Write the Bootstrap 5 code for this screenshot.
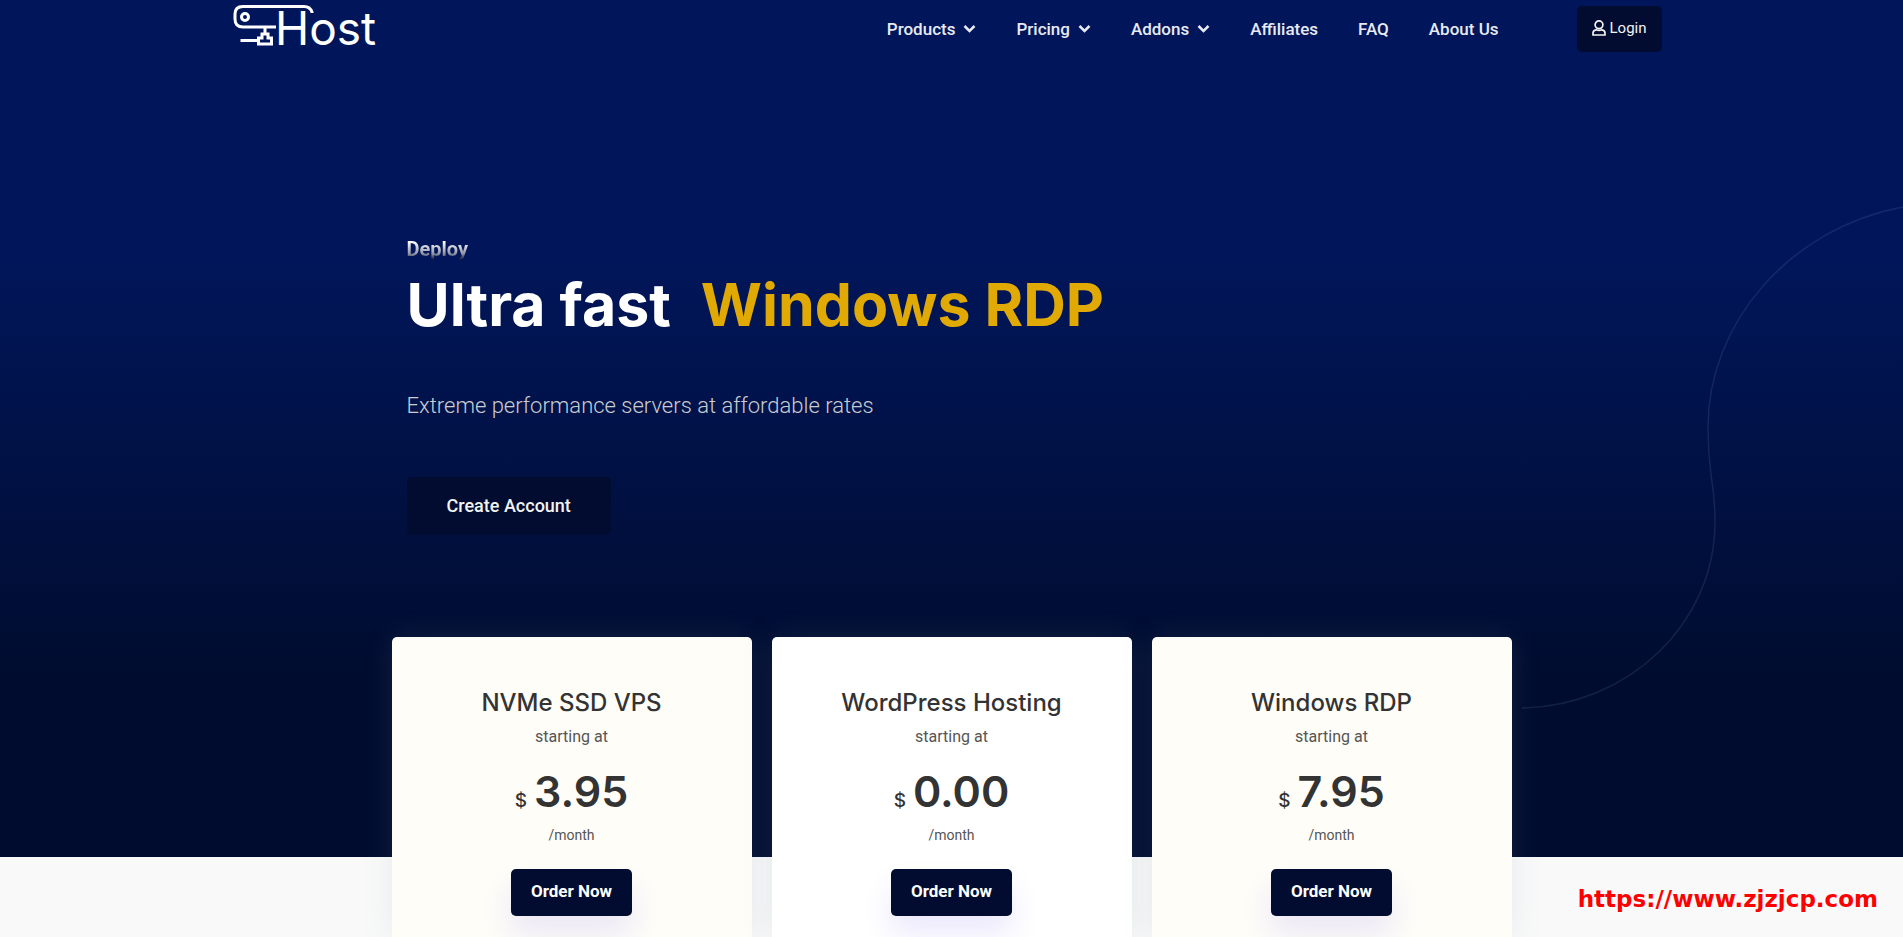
<!DOCTYPE html>
<html lang="en">
<head>
<meta charset="utf-8">
<meta name="viewport" content="width=device-width, initial-scale=1">
<title>Host</title>
<link href="https://cdn.jsdelivr.net/npm/bootstrap@5.3.0/dist/css/bootstrap.min.css" rel="stylesheet">
<style>
  :root { --ink: #010c30; --display: Inter, "Noto Sans", sans-serif; }
  body { font-family: Roboto, "Liberation Sans", sans-serif; background: #f9f9f9; color: #333; }
  .hero { background: linear-gradient(180deg, #01165a 0%, #01165a 30%, #000c2f 79%, #000c2f 100%); padding-bottom: 322px; }
  .curve { position: absolute; right: 0; top: 204px; width: 383px; height: 506px; }
  .topbar { max-width: 1440px; height: 57px; padding: 0 10px 0 0; }
  .topbar .nav-link { color: #e8eaf2; font-weight: 500; font-size: 17px; line-height: 24px; padding: 0 20px; }
  .btn-dark-ink { background: var(--ink); color: #f3f3f3; border: 0; border-radius: 5px; }
  .btn-dark-ink:hover { background: #02134b; color: #fff; }
  .btn-login { font-size: 15px; line-height: 22px; padding: 11px 15px 13px 15px; margin-left: 58px; }
  .wrap { max-width: 1140px; padding: 0 10px; }
  .intro { padding: 180px 15px 0; }
  .eyebrow { font-size: 20px; line-height: 24px; font-weight: 700; margin: 0; }
  .eyebrow span { background: linear-gradient(180deg, #fff 20%, #8f93a4 70%, #081338 95%); -webkit-background-clip: text; background-clip: text; color: transparent; }
  .headline { font-family: var(--display); font-size: 59px; line-height: 72px; font-weight: 700; color: #fff; margin: 8px 0 0; }
  .headline span { color: #e0a904; margin-left: 16px; }
  .tagline { font-size: 22px; line-height: 32px; font-weight: 300; color: #cbccd1; margin: 49px 0 0; }
  .btn-create { font-size: 18px; line-height: 26px; font-weight: 500; padding: 16px 40px; margin-top: 55px; }
  .plans { margin-top: -220px; position: relative; }
  .plan-grid { display: grid; grid-template-columns: repeat(auto-fit, minmax(280px, 1fr)); gap: 20px; }
  .plan { background: #fefdf8; border-radius: 5px 5px 0 0; padding: 48px 16px 20px; text-align: center; box-shadow: 0 0 30px rgba(120, 150, 170, .15); }
  .plan-mid { background: #fff; }
  .plan-title { font-family: var(--display); font-size: 24px; line-height: 36px; font-weight: 500; margin: 0; }
  .plan-note { font-size: 16px; line-height: 24px; color: #555; margin: 4px 0 0; }
  .plan-price { font-family: var(--display); font-size: 43px; line-height: 52px; font-weight: 600; margin: 16px 0 0; }
  .plan-price small { font-size: 19px; line-height: 20px; font-weight: 500; margin-right: 7px; }
  .plan-term { font-size: 14px; line-height: 22px; color: #555; margin: 7px 0 0; }
  .btn-order { font-size: 17px; line-height: 23px; font-weight: 700; color: #fff; padding: 11px 20px 13px; margin-top: 23px; box-shadow: 0 18px 30px rgba(70, 40, 230, .1); }
  .site-url { position: absolute; right: 25px; bottom: 20px; color: #f00; font: 700 23px/36px "DejaVu Sans", sans-serif; text-decoration: none; }
</style>
</head>
<body>
<div class="position-relative min-vh-100 d-flex flex-column">
  <header class="hero">
    <svg class="curve" viewBox="1520 204 383 506" fill="none" stroke="#8fa0d8" stroke-opacity=".14" stroke-width="1.5" aria-hidden="true">
      <path d="M1522 708C1628 706 1715 624 1715 522C1715 506 1714 492 1711 475C1709 459 1708 446 1708 427C1708 323 1790 228 1903 207"/>
    </svg>
    <nav class="topbar mx-auto d-flex align-items-center position-relative" aria-label="Main">
      <a href="#" class="d-block" aria-label="Host home">
        <svg width="150" height="57" viewBox="232 0 150 57" fill="none" stroke="#fff" stroke-width="3" class="d-block">
          <path d="M312 13V12Q310 6.500 304 6.500H243Q235 6.500 235 14V19Q235 27 243 27H276"/>
          <circle cx="245" cy="17" r="3.500"/>
          <path d="M240.500 40.500H258M265 28V33M262 34H268V38H271.500V44H258.500V38H262Z"/>
          <text x="275" y="45" font-family="Inter, sans-serif" font-size="46" font-weight="400" fill="#fff" stroke="none">Host</text>
        </svg>
      </a>
      <ul class="nav ms-auto flex-nowrap">
        <li class="nav-item"><a class="nav-link d-flex align-items-center" href="#">Products<svg class="ms-2" width="13" height="10" viewBox="0 0 13 10" fill="none" stroke="currentColor" stroke-width="2.500"><path d="M1.500 2L6.500 7L11.500 2"/></svg></a></li>
        <li class="nav-item"><a class="nav-link d-flex align-items-center" href="#">Pricing<svg class="ms-2" width="13" height="10" viewBox="0 0 13 10" fill="none" stroke="currentColor" stroke-width="2.500"><path d="M1.500 2L6.500 7L11.500 2"/></svg></a></li>
        <li class="nav-item"><a class="nav-link d-flex align-items-center" href="#">Addons<svg class="ms-2" width="13" height="10" viewBox="0 0 13 10" fill="none" stroke="currentColor" stroke-width="2.500"><path d="M1.500 2L6.500 7L11.500 2"/></svg></a></li>
        <li class="nav-item"><a class="nav-link" href="#">Affiliates</a></li>
        <li class="nav-item"><a class="nav-link" href="#">FAQ</a></li>
        <li class="nav-item"><a class="nav-link" href="#">About Us</a></li>
      </ul>
      <button type="button" class="btn btn-dark-ink btn-login d-flex align-items-center"><svg class="me-1" width="14" height="16" viewBox="0 0 14 16" fill="none" stroke="currentColor" stroke-width="1.700"><circle cx="7" cy="4.800" r="3.900"/><path d="M4.200 9.800Q1 10.200 1 13V15H13V13Q13 10.200 9.800 9.800Q7 11 4.200 9.800Z"/></svg>Login</button>
    </nav>
    <div class="wrap mx-auto position-relative">
      <div class="intro">
        <p class="eyebrow"><span>Deploy</span></p>
        <h1 class="headline">Ultra fast <span>Windows RDP</span></h1>
        <p class="tagline">Extreme performance servers at affordable rates</p>
        <button type="button" class="btn btn-dark-ink btn-create">Create Account</button>
      </div>
    </div>
  </header>
  <main class="plans flex-grow-1 d-flex">
    <div class="wrap mx-auto w-100 plan-grid">
      <section class="plan"><h2 class="plan-title">NVMe SSD VPS</h2><p class="plan-note">starting at</p><p class="plan-price"><small>$</small>3.95</p><p class="plan-term">/month</p><button type="button" class="btn btn-dark-ink btn-order">Order Now</button></section>
      <section class="plan plan-mid"><h2 class="plan-title">WordPress Hosting</h2><p class="plan-note">starting at</p><p class="plan-price"><small>$</small>0.00</p><p class="plan-term">/month</p><button type="button" class="btn btn-dark-ink btn-order">Order Now</button></section>
      <section class="plan"><h2 class="plan-title">Windows RDP</h2><p class="plan-note">starting at</p><p class="plan-price"><small>$</small>7.95</p><p class="plan-term">/month</p><button type="button" class="btn btn-dark-ink btn-order">Order Now</button></section>
    </div>
  </main>
  <a class="site-url" href="https://www.zjzjcp.com">https://www.zjzjcp.com</a>
</div>
<script src="https://cdn.jsdelivr.net/npm/bootstrap@5.3.0/dist/js/bootstrap.bundle.min.js"></script>
</body>
</html>
